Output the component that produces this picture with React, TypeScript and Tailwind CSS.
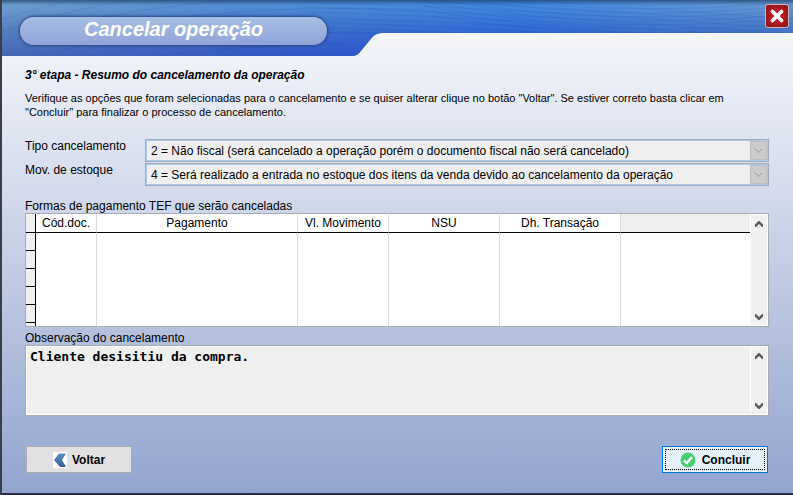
import React from "react";

const columns = [
  { label: "Cód.doc.", width: "w-[61px]" },
  { label: "Pagamento", width: "w-[201px]" },
  { label: "Vl. Movimento", width: "w-[91px]" },
  { label: "NSU", width: "w-[111px]" },
  { label: "Dh. Transação", width: "w-[121px]" },
];

const rows = [0, 1, 2, 3, 4, 5];

function waves() {
  const left = Array.from({ length: 9 }, (_, i) => {
    const y = 8 + i * 12;
    return `M0 ${y + 12} C90 ${y - 20} 230 ${y - 42} 420 ${y - 34}`;
  });
  const sag = Array.from({ length: 11 }, (_, i) => {
    const y = -24 + i * 5;
    return `M${390 + i * 4} ${y - 10} Q640 ${y + 44 - i * 2} 900 ${y - 10}`;
  });
  const fan = Array.from({ length: 9 }, (_, i) => {
    const y = -4 + i * 5;
    return `M300 ${y - 4} Q520 ${y + 2} 800 ${y + 24}`;
  });
  return [...left, ...sag, ...fan];
}

function HeaderArt() {
  return (
    <svg className="absolute inset-x-0 top-0 h-14 w-full" aria-hidden="true">
      <defs>
        <linearGradient id="across" gradientUnits="userSpaceOnUse" x1="0" y1="0" x2="791" y2="0">
          <stop offset="0" stopColor="#709fd0" />
          <stop offset="0.3" stopColor="#5490d4" />
          <stop offset="0.65" stopColor="#3f8de4" />
          <stop offset="0.85" stopColor="#5a96da" />
          <stop offset="1" stopColor="#6a9bd2" />
        </linearGradient>
        <linearGradient id="deep" gradientUnits="userSpaceOnUse" x1="0" y1="0" x2="791" y2="0">
          <stop offset="0" stopColor="#4468b4" />
          <stop offset="0.3" stopColor="#3558c4" />
          <stop offset="0.65" stopColor="#2450cc" />
          <stop offset="1" stopColor="#2f5cbe" />
        </linearGradient>
        <linearGradient id="fade" gradientUnits="userSpaceOnUse" x1="0" y1="0" x2="0" y2="56">
          <stop offset="0" stopColor="#fff" stopOpacity="0" />
          <stop offset="0.15" stopColor="#fff" stopOpacity="0.1" />
          <stop offset="0.6" stopColor="#fff" stopOpacity="0.65" />
          <stop offset="1" stopColor="#fff" stopOpacity="1" />
        </linearGradient>
        <linearGradient id="edge" gradientUnits="userSpaceOnUse" x1="0" y1="0" x2="0" y2="5">
          <stop offset="0" stopColor="#1c3a60" stopOpacity="0.7" />
          <stop offset="1" stopColor="#1c3a60" stopOpacity="0" />
        </linearGradient>
        <mask id="lower">
          <rect width="100%" height="56" fill="url(#fade)" />
        </mask>
        <clipPath id="shape">
          <rect width="100%" height="33" />
          <path d="M0 0H390V33H382C374 33 372 35 368 40L358 52Q355 56 350 56H0Z" />
        </clipPath>
      </defs>
      <g clipPath="url(#shape)">
        <rect width="100%" height="56" fill="url(#across)" />
        <rect width="100%" height="56" fill="url(#deep)" mask="url(#lower)" />
        <rect width="100%" height="5" fill="url(#edge)" />
        <g fill="none" stroke="#1d4596" strokeOpacity="0.14">
          {waves().map((d) => (
            <path key={d} d={d} />
          ))}
        </g>
      </g>
    </svg>
  );
}

function Field({ id, label, value }: { id: string; label: string; value: string }) {
  return (
    <div className="flex">
      <label htmlFor={id} className="w-[120px] shrink-0">
        {label}
      </label>
      <div className="relative h-[23px] flex-1 border border-[#a3abb9] bg-[#efefef]">
        <select
          id={id}
          disabled
          className="block h-full w-full appearance-none border border-[#a9cbee] bg-[#efefef] pl-1 text-black opacity-100"
        >
          <option>{value}</option>
        </select>
        <span className="pointer-events-none absolute inset-y-px right-px flex w-[17px] items-center justify-center border border-[#bfbfbf] bg-[#cccccc]">
          <svg width="9" height="6" viewBox="0 0 9 6" fill="none" stroke="#9b9b9b" aria-hidden="true">
            <path d="M.5 .5L4.500 4.500L8.500 .5" />
          </svg>
        </span>
      </div>
    </div>
  );
}

function ScrollBar({ name }: { name: string }) {
  return (
    <div className="m-px flex w-4 shrink-0 flex-col justify-between bg-[#f0f0f0]">
      <button type="button" aria-label={`${name}: rolar para cima`} className="flex h-[17px] items-center justify-center">
        <svg width="8" height="6" viewBox="0 0 8 6" fill="#5a5a5a" aria-hidden="true">
          <path d="M0 3.500L3.500 0H4.500L8 3.500V6H7L4 3L1 6H0Z" />
        </svg>
      </button>
      <button type="button" aria-label={`${name}: rolar para baixo`} className="flex h-[17px] items-center justify-center">
        <svg width="8" height="6" viewBox="0 0 8 6" fill="#5a5a5a" aria-hidden="true">
          <path d="M0 2.500L3.500 6H4.500L8 2.500V0H7L4 3L1 0H0Z" />
        </svg>
      </button>
    </div>
  );
}

export default function App() {
  return (
    <div className="flex min-h-screen flex-col border-b-2 border-l-2 border-b-[#2b2e42] border-l-[#3a3e48] font-['Liberation_Sans',Arial,sans-serif] text-[12px] leading-[14px] text-black">
      <main className="relative flex flex-1 flex-col bg-linear-to-b from-[#f5f6fb] from-7% via-[#bcc8e1] via-60% to-[#93a4cf]">
        <HeaderArt />
        <header className="relative flex h-14 items-start justify-between pt-[17px] pr-1 pl-[18px]">
          <h1 className="flex h-7 w-[307px] items-center justify-center rounded-full bg-linear-to-b from-[#a6bee3] to-[#91a3da] pb-1 text-[20px] leading-6 font-bold text-white italic shadow-[0_0_3px_1px_#24437f]">
            Cancelar operação
          </h1>
          <button
            type="button"
            aria-label="Fechar"
            className="-mt-[13px] flex size-6 items-center justify-center rounded-[3px] border border-[#d3b5b5] bg-radial from-[#dc2228] to-[#841219]"
          >
            <svg width="14" height="14" viewBox="0 0 14 14" stroke="#fff" strokeWidth="3.600" strokeLinecap="round" aria-hidden="true">
              <path d="M2.500 2.500L11.500 11.500M11.500 2.500L2.500 11.500" />
            </svg>
          </button>
        </header>

        <section className="flex flex-1 flex-col pt-3 pr-6 pb-5 pl-[23px]">
          <h2 className="font-bold italic">3° etapa - Resumo do cancelamento da operação</h2>
          <p className="mt-[9px] text-[11px]">
            Verifique as opções que foram selecionadas para o cancelamento e se quiser alterar clique no botão "Voltar". Se
            estiver correto basta clicar em "Concluir" para finalizar o processo de cancelamento.
          </p>

          <div className="mt-5 flex flex-col gap-px">
            <Field
              id="tipo"
              label="Tipo cancelamento"
              value="2 = Não fiscal (será cancelado a operação porém o documento fiscal não será cancelado)"
            />
            <Field
              id="mov"
              label="Mov. de estoque"
              value="4 = Será realizado a entrada no estoque dos itens da venda devido ao cancelamento da operação"
            />
          </div>

          <h3 className="mt-[13px]" id="formas">
            Formas de pagamento TEF que serão canceladas
          </h3>
          <div className="flex h-[114px] border border-[#a8abb2] bg-white">
            <div className="min-w-0 flex-1 overflow-hidden">
              <table aria-labelledby="formas" className="w-full table-fixed border-separate border-spacing-0">
                <thead>
                  <tr className="h-[19px]">
                    <td className="w-[10px] border-r border-b border-black bg-[#efefef] p-0" />
                    {columns.map((c) => (
                      <th
                        key={c.label}
                        className={`${c.width} border-r border-b border-r-[#dcdcdc] border-b-black p-0 font-normal whitespace-nowrap`}
                      >
                        {c.label}
                      </th>
                    ))}
                    <td className="border-b border-black bg-[#efefef] p-0" />
                  </tr>
                </thead>
                <tbody>
                  {rows.map((r) => (
                    <tr key={r} className="h-[18px]">
                      <td className="border-r border-b border-black bg-[#efefef] p-0" />
                      {columns.map((c) => (
                        <td key={c.label} className="border-r border-[#dcdcdc] p-0" />
                      ))}
                      <td className="p-0" />
                    </tr>
                  ))}
                </tbody>
              </table>
            </div>
            <ScrollBar name="Formas de pagamento" />
          </div>

          <label htmlFor="obs" className="mt-1">
            Observação do cancelamento
          </label>
          <div className="flex h-[71px] border border-[#a8abb2] bg-white">
            <textarea
              id="obs"
              readOnly
              defaultValue="Cliente desisitiu da compra."
              className="my-px ml-px block min-w-0 flex-1 resize-none overflow-hidden bg-[#efefef] px-[3px] pt-[2px] font-['DejaVu_Sans_Mono',monospace] text-[13px] leading-[15px] font-bold outline-none"
            />
            <ScrollBar name="Observação" />
          </div>

          <div className="mt-[30px] flex justify-between px-px">
            <button
              type="button"
              className="flex h-[27px] w-[106px] items-center justify-center gap-[5px] border border-[#adadad] bg-[#e1e1e1] font-bold"
            >
              <svg width="14" height="16" viewBox="0 0 14 16" aria-hidden="true">
                <defs>
                  <linearGradient id="chevron" x1="0" y1="0" x2="0" y2="1">
                    <stop offset="0" stopColor="#5f8fbd" />
                    <stop offset="1" stopColor="#375f8c" />
                  </linearGradient>
                </defs>
                <rect width="14" height="16" fill="#fff" />
                <path d="M6 1.500H13L9 8L13 15H7L1 8Z" fill="url(#chevron)" />
              </svg>
              Voltar
            </button>
            <button type="button" className="h-[27px] w-[106px] border border-[#0078d7] bg-[#e5f1fb] p-[2px] font-bold">
              <span className="flex h-full items-center justify-center gap-[6px] border border-dotted border-black">
                <svg width="16" height="16" viewBox="0 0 16 16" aria-hidden="true">
                  <circle cx="8" cy="8" r="7.500" fill="#45cf72" />
                  <path d="M4 8.500L6.800 11L12 5" fill="none" stroke="#fff" strokeWidth="2.400" />
                </svg>
                Concluir
              </span>
            </button>
          </div>
        </section>
      </main>
    </div>
  );
}
